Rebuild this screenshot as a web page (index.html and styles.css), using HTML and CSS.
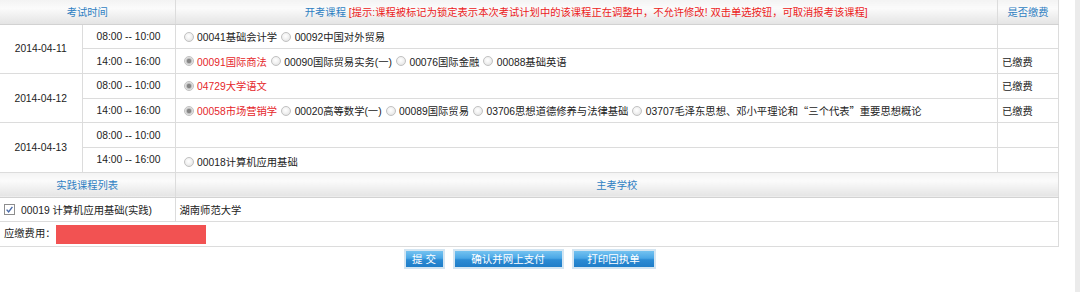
FILE: index.html
```html
<!DOCTYPE html>
<html lang="zh-CN">
<head>
<meta charset="utf-8">
<title>报考课程</title>
<link rel="stylesheet" href="styles.css">
</head>
<body>
<div class="page">
  <div class="main">
    <table class="plan">
      <colgroup><col class="c-date"><col class="c-time"><col class="c-course"><col class="c-fee"></colgroup>
      <tr class="head">
        <th colspan="2">考试时间</th>
        <th>开考课程 <span class="hint">[提示:课程被标记为锁定表示本次考试计划中的该课程正在调整中，不允许修改! 双击单选按钮，可取消报考该课程]</span></th>
        <th>是否缴费</th>
      </tr>
      <tr>
        <td class="date" rowspan="2">2014-04-11</td>
        <td class="time">08:00 -- 10:00</td>
        <td class="course"><div class="courses"><span class="opt"><i class="radio"></i>00041基础会计学</span><span class="opt"><i class="radio"></i>00092中国对外贸易</span></div></td>
        <td class="fee"></td>
      </tr>
      <tr>
        <td class="time">14:00 -- 16:00</td>
        <td class="course"><div class="courses"><span class="opt locked"><i class="radio on"></i>00091国际商法</span><span class="opt"><i class="radio"></i>00090国际贸易实务(一)</span><span class="opt"><i class="radio"></i>00076国际金融</span><span class="opt"><i class="radio"></i>00088基础英语</span></div></td>
        <td class="fee">已缴费</td>
      </tr>
      <tr>
        <td class="date" rowspan="2">2014-04-12</td>
        <td class="time">08:00 -- 10:00</td>
        <td class="course"><div class="courses"><span class="opt locked"><i class="radio on"></i>04729大学语文</span></div></td>
        <td class="fee">已缴费</td>
      </tr>
      <tr>
        <td class="time">14:00 -- 16:00</td>
        <td class="course"><div class="courses"><span class="opt locked"><i class="radio on"></i>00058市场营销学</span><span class="opt"><i class="radio"></i>00020高等数学(一)</span><span class="opt"><i class="radio"></i>00089国际贸易</span><span class="opt"><i class="radio"></i>03706思想道德修养与法律基础</span><span class="opt"><i class="radio"></i>03707毛泽东思想、邓小平理论和<span class="fw">“</span>三个代表<span class="fw">”</span>重要思想概论</span></div></td>
        <td class="fee">已缴费</td>
      </tr>
      <tr>
        <td class="date" rowspan="2">2014-04-13</td>
        <td class="time">08:00 -- 10:00</td>
        <td class="course"></td>
        <td class="fee"></td>
      </tr>
      <tr>
        <td class="time">14:00 -- 16:00</td>
        <td class="course low"><div class="courses"><span class="opt"><i class="radio"></i>00018计算机应用基础</span></div></td>
        <td class="fee"></td>
      </tr>
      <tr class="head">
        <th colspan="2">实践课程列表</th>
        <th colspan="2">主考学校</th>
      </tr>
      <tr>
        <td colspan="2" class="practice"><span class="check"><svg width="11" height="11" viewBox="0 0 11 11"><rect x="0.5" y="0.5" width="10" height="10" fill="#fff" stroke="#8d8d8d"/><path d="M2.6 5.6 L4.6 7.8 L8.4 2.8" fill="none" stroke="#4a6aa8" stroke-width="1.4"/></svg></span>00019 计算机应用基础(实践)</td>
        <td colspan="2" class="school">湖南师范大学</td>
      </tr>
      <tr>
        <td colspan="4" class="total">应缴费用：<span class="redact"></span></td>
      </tr>
    </table>
    <div class="actions">
      <button class="btn b-submit">提 交</button>
      <button class="btn b-pay">确认并网上支付</button>
      <button class="btn b-print">打印回执单</button>
    </div>
  </div>
  <div class="scroll"></div>
</div>
</body>
</html>
```
FILE: styles.css
```css
html, body {
  margin: 0;
  padding: 0;
  background: #fff;
}
body {
  font-family: "Liberation Sans", "Noto Sans CJK SC", sans-serif;
  font-size: 10.3px;
  color: #222;
}
.page {
  display: flex;
  height: 292px;
}
.main {
  width: 1075px;
}
.scroll {
  width: 5px;
  background: #ebebeb;
}
.plan {
  width: 1059px;
  table-layout: fixed;
  border-collapse: collapse;
  border-left-style: hidden;
  border-top-style: hidden;
}
.c-date { width: 82px; }
.c-time { width: 93px; }
.c-fee { width: 61px; }
.plan td, .plan th {
  border: 1px solid #dcdcdc;
  padding: 0 4px;
  height: 23.7px;
  font-weight: normal;
  white-space: nowrap;
  overflow: hidden;
}
.head th {
  color: #2f7fc2;
  text-align: center;
  background: linear-gradient(#f3f3f3 0%, #fbfbfb 35%, #f2f2f2 60%, #e4e4e4 100%);
  border-bottom-color: #d2d2d2;
}
.hint {
  color: #ec2222;
}
.date, .time {
  text-align: center;
}
.fee {
  text-align: left;
}
.courses {
  display: flex;
  align-items: center;
}
.opt {
  display: flex;
  align-items: center;
}
.locked {
  color: #e5262a;
}
.fw {
  font-family: "Noto Sans CJK SC", sans-serif;
}
.radio {
  display: inline-block;
  box-sizing: border-box;
  width: 10px;
  height: 10px;
  margin: 0 3.5px 0 4px;
  border-radius: 50%;
  border: 1px solid #c2c2c2;
  background: radial-gradient(circle at 45% 40%, #ffffff 0%, #f2f2f2 45%, #dadada 100%);
}
.radio.on {
  background: radial-gradient(circle, #858585 0 1.8px, #c2c2c2 2.6px, #e8e8e8 70%, #d6d6d6 100%);
}
.low .courses {
  padding-top: 4px;
}
.practice {
  padding-left: 8px;
}
.check {
  display: inline-block;
  vertical-align: -1px;
  margin-right: 6px;
}
.check svg {
  display: block;
}
.school {
  padding-left: 3px;
}
.total {
  padding-left: 5px;
}
.redact {
  display: inline-block;
  vertical-align: middle;
  width: 150px;
  height: 19px;
  margin-left: 1px;
  background: #f25252;
}
.actions {
  width: 1059px;
  display: flex;
  justify-content: center;
  gap: 8px;
  padding-top: 2px;
}
.btn {
  box-sizing: border-box;
  height: 20px;
  padding: 0;
  border: 2px solid #d3e5f2;
  background: linear-gradient(#74c2f0 0%, #4aa7e6 45%, #2b8bd4 55%, #1f7dc8 100%);
  color: #fff;
  font-family: "Liberation Sans", "Noto Sans CJK SC", sans-serif;
  font-size: 10.5px;
  line-height: 16px;
}
.b-submit { width: 41px; }
.b-pay { width: 111px; }
.b-print { width: 84px; }
```
